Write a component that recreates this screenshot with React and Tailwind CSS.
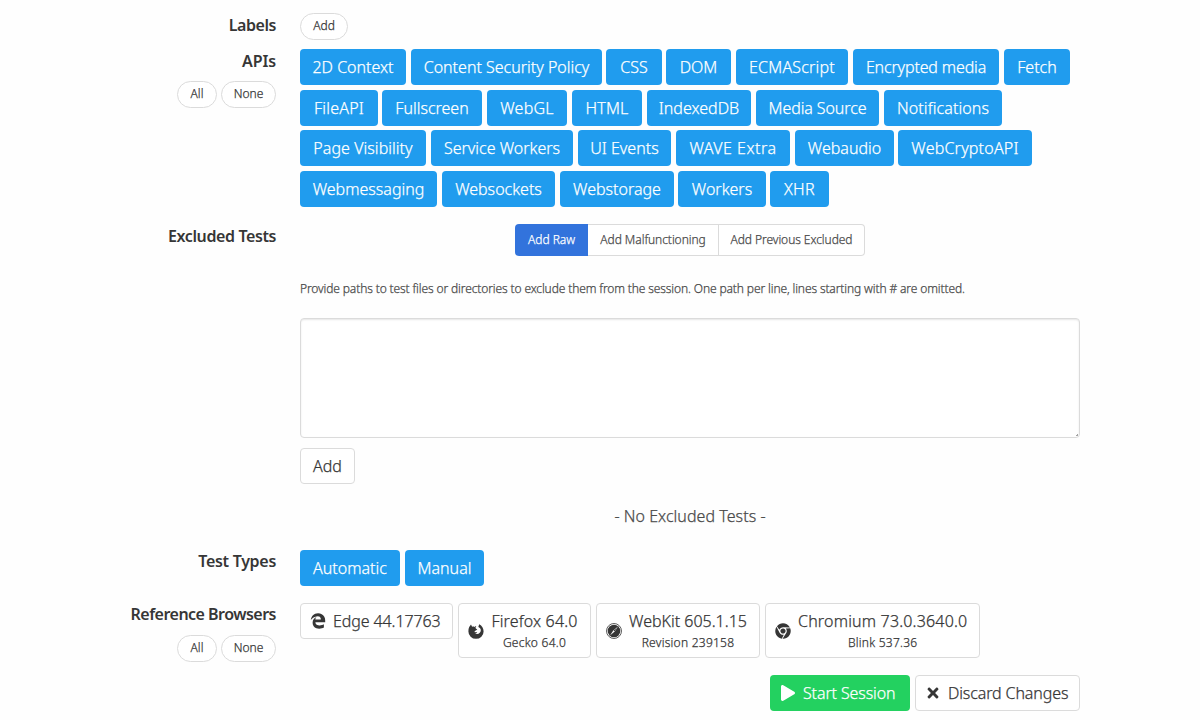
import React from "react";
import { FaEdgeLegacy, FaChrome, FaPlay, FaTimes } from "react-icons/fa";

const apiRows = [
  {
    gap: "mb-[5px]",
    items: [
      ["2D Context", "w-[106px] mr-[5px]"],
      ["Content Security Policy", "w-[191px] mr-1"],
      ["CSS", "w-[56px] mr-1"],
      ["DOM", "w-[65px] mr-[5px]"],
      ["ECMAScript", "w-[112px] mr-[5px] tracking-[0.2px]"],
      ["Encrypted media", "w-[146px] mr-[5px] tracking-[-0.15px]"],
      ["Fetch", "w-[66px]"],
    ],
  },
  {
    gap: "mb-1",
    items: [
      ["FileAPI", "w-[78px] mr-1 tracking-[0.2px]"],
      ["Fullscreen", "w-[100px] mr-[5px]"],
      ["WebGL", "w-[80px] mr-[5px] tracking-[0.2px]"],
      ["HTML", "w-[70px] mr-[5px] tracking-[0.2px]"],
      ["IndexedDB", "w-[104px] mr-[5px]"],
      ["Media Source", "w-[123px] mr-[5px] tracking-[-0.1px]"],
      ["Notifications", "w-[118px] tracking-[0.1px]"],
    ],
  },
  {
    gap: "mb-[5px]",
    items: [
      ["Page Visibility", "w-[126px] mr-[5px] tracking-[0.05px]"],
      ["Service Workers", "w-[142px] mr-[5px]"],
      ["UI Events", "w-[93px] mr-[5px]"],
      ["WAVE Extra", "w-[114px] mr-[5px] tracking-[0.5px]"],
      ["Webaudio", "w-[99px] mr-1"],
      ["WebCryptoAPI", "w-[134px] tracking-[0.2px]"],
    ],
  },
  {
    gap: "",
    items: [
      ["Webmessaging", "w-[137px] mr-[5px]"],
      ["Websockets", "w-[113px] mr-[5px]"],
      ["Webstorage", "w-[114px] mr-1"],
      ["Workers", "w-[88px] mr-1"],
      ["XHR", "w-[59px] tracking-[0.4px]"],
    ],
  },
];

function FirefoxIcon({ className }) {
  return (
    <svg viewBox="0 0 16 16" fill="currentColor" className={className}>
      <path d="M1.2 4 3 1.4 4.1 3.8C5 3.5 5.8 3.6 6.6 3.9 7 3.3 7.7 3 8.3 3 7.6 3.8 7.4 4.8 7.8 5.4L9.3 6.4 7.8 7.4C6.4 7.9 6.4 8.7 6.8 9.2L9.2 9C8.9 9.9 8.1 10.2 7 10.2 9.8 12 12.8 10 12.8 7.2 12.8 5.4 11.6 4.6 10.3 4L11.2 1.2C14 2.6 15.6 5.3 15.6 8.4A7.6 7.4 0 0 1 .4 8.4C.4 6.8.6 5.4 1.2 4Z" />
    </svg>
  );
}

function SafariIcon({ className }) {
  return (
    <svg viewBox="0 0 16 16" className={className}>
      <circle cx="8" cy="8" r="7.5" fill="none" stroke="currentColor" strokeWidth=".8" />
      <circle cx="8" cy="8" r="6.3" fill="currentColor" />
      <path d="M12 3.6 8.7 8.6 4 12.4 7.3 7.4Z" fill="#fff" />
      <path d="M11 4.9 8.4 8.4 7.6 7.6Z" fill="currentColor" />
    </svg>
  );
}

function Tag({ className, children }) {
  return (
    <button className={`flex h-9 shrink-0 items-center justify-center rounded bg-[#209cee] text-white ${className}`}>
      {children}
    </button>
  );
}

function Pill({ className, children }) {
  return (
    <button className={`flex h-[27px] items-center justify-center rounded-full border border-[#dbdbdb] bg-white pb-px text-xs text-[#363636] ${className}`}>
      {children}
    </button>
  );
}

function Row({ label, pills, className, labelClass = "tracking-[-0.45px]", children }) {
  return (
    <div className={`flex ${className}`}>
      <div className="mr-6 flex w-[156px] shrink-0 flex-col items-end">
        <div className={`h-6 font-semibold leading-6 text-[#363636] [-webkit-text-stroke:0px] ${labelClass}`}>{label}</div>
        {pills && (
          <div className="mt-2 flex gap-1">
            <Pill className="w-10">All</Pill>
            <Pill className="w-[55px]">None</Pill>
          </div>
        )}
      </div>
      <div className="w-[780px] shrink-0">{children}</div>
    </div>
  );
}

function Browser({ icon: Icon, name, engine, className }) {
  return (
    <button className={`flex items-center rounded border border-[#dbdbdb] bg-white pr-3 pl-[9px] text-[#363636] ${className}`}>
      <Icon className="mr-[7px] size-4 shrink-0" />
      <span className="flex flex-1 flex-col items-center">
        <span className="leading-6">{name}</span>
        {engine && <span className="text-xs leading-5 tracking-[0.25px]">{engine}</span>}
      </span>
    </button>
  );
}

export default function App() {
  return (
    <div className="h-[720px] w-[1200px] overflow-hidden bg-[#fefefe] pl-[120px] font-['Noto_Sans',sans-serif] text-base font-light whitespace-nowrap text-[#4a4a4a] [-webkit-text-stroke:0.25px]">
      <Row label="Labels" className="h-9 pt-[13px]">
        <Pill className="w-12">Add</Pill>
      </Row>
      <Row label="APIs" pills labelClass="tracking-[-0.1px]" className="mt-[13px] h-[175px]">
        {apiRows.map((row, i) => (
          <div key={i} className={`flex ${row.gap}`}>
            {row.items.map(([name, cls]) => (
              <Tag key={name} className={cls}>{name}</Tag>
            ))}
          </div>
        ))}
      </Row>
      <Row label="Excluded Tests" className="h-[326px]" labelClass="tracking-[-0.4px]">
        <div className="flex justify-center text-xs tracking-[-0.06px]">
          <button className="h-8 w-[73px] rounded-l bg-[#3273dc] text-white">Add Raw</button>
          <button className="h-8 w-[131px] border border-l-0 border-[#dbdbdb] bg-white">Add Malfunctioning</button>
          <button className="h-8 w-[146px] rounded-r border border-l-0 border-[#dbdbdb] bg-white">Add Previous Excluded</button>
        </div>
        <p className="mt-6 text-xs leading-[18px] tracking-[-0.12px]">
          Provide paths to test files or directories to exclude them from the session. One path per line, lines starting with # are omitted.
        </p>
        <div className="relative mt-5">
          <textarea className="block h-[120px] w-[780px] resize-none rounded border border-[#dbdbdb] bg-white shadow-[inset_0_1px_2px_rgba(10,10,10,0.1)]" />
          <svg viewBox="0 0 3 3" className="absolute right-0.5 bottom-0.5 size-[2px]">
            <path d="M0 3 3 0V1.5L1.5 3Z" fill="#4a4a4a" />
          </svg>
        </div>
        <button className="mt-2.5 block h-9 w-[55px] rounded border border-[#dbdbdb] bg-white pb-px text-[#363636]">Add</button>
        <p className="mt-5 text-center leading-6 tracking-[0.05px]">- No Excluded Tests -</p>
      </Row>
      <Row label="Test Types" labelClass="-mt-px mb-px tracking-[-0.3px]" className="h-[53px]">
        <div className="flex">
          <Tag className="mr-[5px] w-[100px]">Automatic</Tag>
          <Tag className="w-[79px]">Manual</Tag>
        </div>
      </Row>
      <Row label="Reference Browsers" labelClass="-mt-px mb-px tracking-[-0.52px]" pills className="h-[72px]">
        <div className="flex items-start">
          <Browser icon={FaEdgeLegacy} name="Edge 44.17763" className="mr-[5px] h-9 w-[153px] tracking-[-0.1px]" />
          <Browser icon={FirefoxIcon} name="Firefox 64.0" engine="Gecko 64.0" className="mr-[5px] h-[55px] w-[133px] tracking-[0.15px]" />
          <Browser icon={SafariIcon} name="WebKit 605.1.15" engine="Revision 239158" className="mr-[5px] h-[55px] w-[164px]" />
          <Browser icon={FaChrome} name="Chromium 73.0.3640.0" engine="Blink 537.36" className="h-[55px] w-[215px] tracking-[0.18px]" />
        </div>
      </Row>
      <div className="flex w-[960px] justify-end gap-[5px] tracking-[-0.12px]">
        <button className="flex h-9 w-[140px] items-center rounded bg-[#23d160] pl-[10px] text-white">
          <FaPlay className="mr-[7px] size-4" />Start Session
        </button>
        <button className="flex h-9 w-[165px] items-center rounded border border-[#dbdbdb] bg-white pl-[9px] text-[#363636]">
          <FaTimes className="mr-[7px] size-4" />Discard Changes
        </button>
      </div>
    </div>
  );
}
